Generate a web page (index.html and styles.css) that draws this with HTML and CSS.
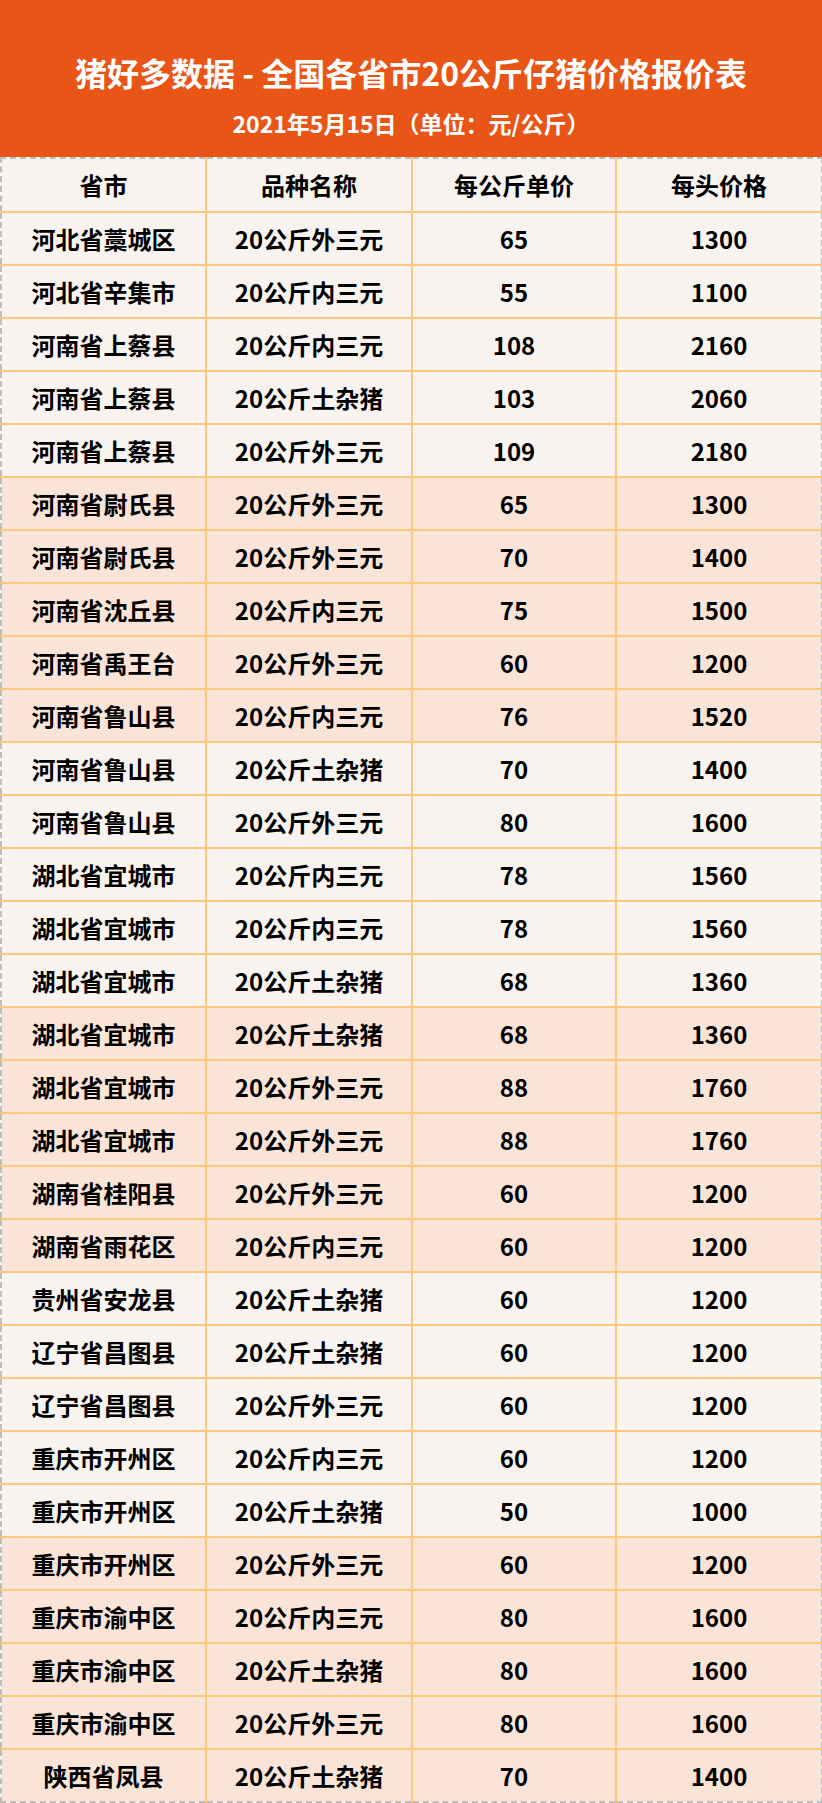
FILE: index.html
```html
<!DOCTYPE html>
<html lang="zh-CN">
<head>
<meta charset="utf-8">
<title>猪好多数据 - 全国各省市20公斤仔猪价格报价表</title>
<link rel="stylesheet" href="styles.css">
</head>
<body>
<div class="page">
  <header class="banner">
    <h1 class="title">猪好多数据 - 全国各省市20公斤仔猪价格报价表</h1>
    <p class="subtitle">2021年5月15日（单位：元/公斤）</p>
  </header>
  <table class="price-table">
    <colgroup>
      <col class="c1"><col class="c2"><col class="c3"><col class="c4">
    </colgroup>
    <thead>
      <tr><th>省市</th><th>品种名称</th><th>每公斤单价</th><th>每头价格</th></tr>
    </thead>
    <tbody>
      <tr class="light"><td>河北省藁城区</td><td>20公斤外三元</td><td>65</td><td>1300</td></tr>
      <tr class="light"><td>河北省辛集市</td><td>20公斤内三元</td><td>55</td><td>1100</td></tr>
      <tr class="light"><td>河南省上蔡县</td><td>20公斤内三元</td><td>108</td><td>2160</td></tr>
      <tr class="light"><td>河南省上蔡县</td><td>20公斤土杂猪</td><td>103</td><td>2060</td></tr>
      <tr class="light"><td>河南省上蔡县</td><td>20公斤外三元</td><td>109</td><td>2180</td></tr>
      <tr class="peach"><td>河南省尉氏县</td><td>20公斤外三元</td><td>65</td><td>1300</td></tr>
      <tr class="peach"><td>河南省尉氏县</td><td>20公斤外三元</td><td>70</td><td>1400</td></tr>
      <tr class="peach"><td>河南省沈丘县</td><td>20公斤内三元</td><td>75</td><td>1500</td></tr>
      <tr class="peach"><td>河南省禹王台</td><td>20公斤外三元</td><td>60</td><td>1200</td></tr>
      <tr class="peach"><td>河南省鲁山县</td><td>20公斤内三元</td><td>76</td><td>1520</td></tr>
      <tr class="light"><td>河南省鲁山县</td><td>20公斤土杂猪</td><td>70</td><td>1400</td></tr>
      <tr class="light"><td>河南省鲁山县</td><td>20公斤外三元</td><td>80</td><td>1600</td></tr>
      <tr class="light"><td>湖北省宜城市</td><td>20公斤内三元</td><td>78</td><td>1560</td></tr>
      <tr class="light"><td>湖北省宜城市</td><td>20公斤内三元</td><td>78</td><td>1560</td></tr>
      <tr class="light"><td>湖北省宜城市</td><td>20公斤土杂猪</td><td>68</td><td>1360</td></tr>
      <tr class="peach"><td>湖北省宜城市</td><td>20公斤土杂猪</td><td>68</td><td>1360</td></tr>
      <tr class="peach"><td>湖北省宜城市</td><td>20公斤外三元</td><td>88</td><td>1760</td></tr>
      <tr class="peach"><td>湖北省宜城市</td><td>20公斤外三元</td><td>88</td><td>1760</td></tr>
      <tr class="peach"><td>湖南省桂阳县</td><td>20公斤外三元</td><td>60</td><td>1200</td></tr>
      <tr class="peach"><td>湖南省雨花区</td><td>20公斤内三元</td><td>60</td><td>1200</td></tr>
      <tr class="light"><td>贵州省安龙县</td><td>20公斤土杂猪</td><td>60</td><td>1200</td></tr>
      <tr class="light"><td>辽宁省昌图县</td><td>20公斤土杂猪</td><td>60</td><td>1200</td></tr>
      <tr class="light"><td>辽宁省昌图县</td><td>20公斤外三元</td><td>60</td><td>1200</td></tr>
      <tr class="light"><td>重庆市开州区</td><td>20公斤内三元</td><td>60</td><td>1200</td></tr>
      <tr class="light"><td>重庆市开州区</td><td>20公斤土杂猪</td><td>50</td><td>1000</td></tr>
      <tr class="peach"><td>重庆市开州区</td><td>20公斤外三元</td><td>60</td><td>1200</td></tr>
      <tr class="peach"><td>重庆市渝中区</td><td>20公斤内三元</td><td>80</td><td>1600</td></tr>
      <tr class="peach"><td>重庆市渝中区</td><td>20公斤土杂猪</td><td>80</td><td>1600</td></tr>
      <tr class="peach"><td>重庆市渝中区</td><td>20公斤外三元</td><td>80</td><td>1600</td></tr>
      <tr class="peach"><td>陕西省凤县</td><td>20公斤土杂猪</td><td>70</td><td>1400</td></tr>
    </tbody>
  </table>
</div>
</body>
</html>
```

FILE: styles.css
```css
html, body {
  margin: 0;
  padding: 0;
  background: #ffffff;
}

.page {
  width: 822px;
  font-family: "Noto Sans CJK SC", "Noto Sans", sans-serif;
  font-weight: 700;
  color: #000000;
}

.banner {
  background: #e95516;
  height: 157px;
  box-sizing: border-box;
  padding-top: 51px;
  text-align: center;
  color: #ffffff;
}

.title {
  margin: 0;
  font-size: 32px;
  line-height: 42px;
  font-weight: 700;
  letter-spacing: 0;
}

.subtitle {
  margin: 15px 0 0;
  font-size: 23px;
  line-height: 30px;
  font-weight: 700;
}

.price-table {
  width: 821px;
  border-collapse: collapse;
  table-layout: fixed;
  border: 2px dashed #bdbdbd;
}

.c1 { width: 205px; }
.c2 { width: 206px; }
.c3 { width: 204px; }
.c4 { width: 206px; }

.price-table th,
.price-table td {
  border: 2px solid #fcc97c;
  padding: 0;
  text-align: center;
  vertical-align: middle;
  font-size: 24px;
  font-weight: 700;
  line-height: 30px;
}

.price-table thead tr {
  height: 54px;
  background: #f8f3ef;
}

.price-table thead th {
  border-top: 2px dashed #bdbdbd;
}

.price-table tbody tr {
  height: 53px;
}

.price-table th:first-child,
.price-table td:first-child {
  border-left: 2px dashed #bdbdbd;
}

.price-table th:last-child,
.price-table td:last-child {
  border-right: 2px dashed #bdbdbd;
}

.price-table tbody tr:last-child td {
  border-bottom: 2px dashed #bdbdbd;
}

.light { background: #f8f3ef; }
.peach { background: #fae4d8; }
```
